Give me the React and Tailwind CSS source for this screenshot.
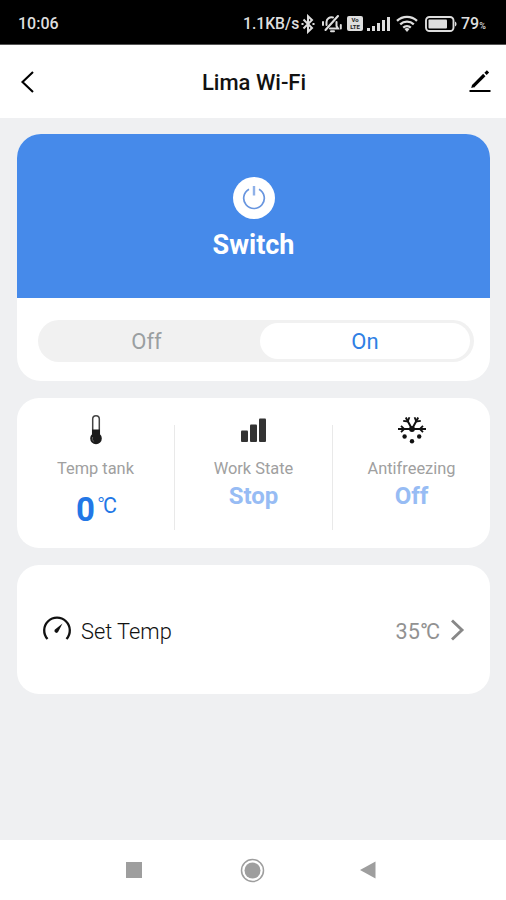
import { useState } from 'react';

function StatusBar() {
  return (
    <div className="flex h-[44.500px] shrink-0 items-center justify-between border-b border-[#555] bg-black pl-[18px] pr-[19px] pt-[4px] text-[#dedede]">
      <span className="text-[16px] font-medium">10:06</span>
      <div className="flex h-5 items-center">
        <span className="w-[57px] whitespace-nowrap text-[15.700px] font-medium">1.1KB/s</span>
        {/* Bluetooth */}
        <svg className="ml-[1px] mr-[6px] h-[20px] w-[14px]" viewBox="0 0 14 20" fill="none" stroke="currentColor" strokeWidth="2">
          <path d="M2.500 5.500 11 14 7 17.800V2.200L11 6l-8.500 8.500" />
          <path d="M.5 10h2M11.500 10h2" strokeWidth="2.200" />
        </svg>
        {/* Muted bell */}
        <svg className="mr-[4px] h-[20px] w-[22px]" viewBox="0 0 22 20" fill="none" stroke="currentColor" strokeWidth="2" strokeLinecap="round">
          <path d="M5.500 11V8a5 5 0 0 1 6.500-4.500M15.500 8v4l1.500 2.500H9M10 17.300h3" />
          <path d="M17 2 4.500 16" strokeWidth="2.100" />
          <path d="M2 8v3M19.800 11v3.500" strokeWidth="2" />
        </svg>
        {/* VoLTE */}
        <span className="mr-[4px] flex h-[15px] w-[16px] flex-col items-center justify-center gap-px rounded-[2px] bg-[#dedede] text-[6px] font-bold text-[#222]">
          <span className="h-[6px] leading-[6px]">Vo</span>
          <span className="h-[6px] leading-[6px]">LTE</span>
        </span>
        {/* Cell signal */}
        <svg className="mr-[6px] h-[16px] w-[23px]" viewBox="0 0 23 16" fill="currentColor">
          <rect x="0" y="12" width="3" height="3" />
          <rect x="5" y="10" width="3" height="5" />
          <rect x="10" y="7" width="3" height="8" />
          <rect x="15" y="4" width="3" height="11" />
          <rect x="20" y="1" width="3" height="14" />
        </svg>
        {/* Wi-Fi */}
        <svg className="mr-[7px] h-[17px] w-[22px]" viewBox="0 0 22 17" fill="none" stroke="currentColor" strokeWidth="2.300">
          <path d="M1 5.800a14.500 14.500 0 0 1 20 0" />
          <path d="M4.200 9.300a10 10 0 0 1 13.600 0" />
          <path d="M7.200 12.600a5.800 5.800 0 0 1 7.600 0" />
          <path d="m11 17-2.500-3a4 4 0 0 1 5 0z" fill="currentColor" stroke="none" />
        </svg>
        {/* Battery */}
        <svg className="mr-[4px] h-[16px] w-[32px]" viewBox="0 0 32 16" fill="none">
          <rect x="1" y="1" width="27.500" height="14" rx="3.500" stroke="currentColor" strokeWidth="1.900" />
          <rect x="3.500" y="3.500" width="18.500" height="9" rx="1" fill="currentColor" />
          <path d="M30 5.500c2 .8 2 4.200 0 5z" fill="currentColor" />
        </svg>
        <span className="w-[26px] whitespace-nowrap text-[16px] font-medium">
          79<span className="text-[9px]">%</span>
        </span>
      </div>
    </div>
  );
}

function Header() {
  return (
    <header className="flex h-[73.500px] shrink-0 items-center justify-between bg-white pl-[20px] pr-[14px] text-black">
      <button aria-label="Back" className="w-[20px] pt-[1px]">
        <svg className="h-[22px] w-[15px]" viewBox="0 0 15 22" fill="none" stroke="currentColor" strokeWidth="2.100">
          <path d="M13 1 2.500 11 13 21" />
        </svg>
      </button>
      <h1 className="pt-[3px] text-[22px] font-medium text-[#111]">Lima Wi-Fi</h1>
      <button aria-label="Edit">
        <svg className="h-[24px] w-[24px]" viewBox="0 0 24 24" fill="none" stroke="currentColor">
          <path d="M5 17.300 16.300 6" strokeWidth="3.200" />
          <path d="m3.200 19 1-3.500 2.500 2.500z" fill="currentColor" stroke="none" />
          <path d="m17.500 4.800 2.500-2.500" strokeWidth="3.200" />
          <path d="M1.500 22h21" strokeWidth="2" />
        </svg>
      </button>
    </header>
  );
}

function SwitchCard() {
  const [on, setOn] = useState(true);

  return (
    <section className="h-[247px] shrink-0 overflow-hidden rounded-[24px] bg-white">
      <div className="flex h-[164px] flex-col items-center bg-[#468aea] pt-[43px] text-white">
        <div className="flex h-[42px] w-[42px] items-center justify-center rounded-full bg-white">
          <svg className="h-[26px] w-[26px]" viewBox="0 0 26 26" fill="none" stroke="#6996df" strokeWidth="1.700">
            <path d="M8 4.200a10.300 10.300 0 1 0 10 0" />
            <path d="M13 1v9.500" stroke="#8fb1e8" strokeWidth="2.400" />
          </svg>
        </div>
        <span className="mt-[9px] text-[27px] font-bold leading-[34px]">Switch</span>
      </div>
      <div className="ml-[21px] mr-[16px] mt-[22px] flex h-[42px] rounded-full bg-[#f1f1f1] p-[3px] pr-[4px] text-[22px]">
        <button
          onClick={() => setOn(false)}
          className={`flex-1 rounded-full pr-[8px] ${on ? 'text-[#9a9fa1]' : 'bg-white text-[#2276df]'}`}
        >
          Off
        </button>
        <button
          onClick={() => setOn(true)}
          className={`w-[210px] rounded-full ${on ? 'bg-white text-[#2f80e4]' : 'text-[#9a9fa1]'}`}
        >
          On
        </button>
      </div>
    </section>
  );
}

function ThermometerIcon() {
  return (
    <svg className="h-[32px] w-[16px]" viewBox="0 0 16 32">
      <path d="M4.700 20V5a3.300 3.300 0 0 1 6.600 0V20" fill="none" stroke="#444" strokeWidth="1.500" />
      <path d="M4 15.500h8v4.700a5.800 5.800 0 1 1-8 0z" fill="#1b1b1b" />
      <path d="M4.600 23a4 4 0 0 0 1 4.500" fill="none" stroke="#777" strokeWidth=".8" />
    </svg>
  );
}

function BarsIcon() {
  return (
    <svg className="h-[32px] w-[28px]" viewBox="0 0 28 32" fill="#333">
      <rect x="1" y="16.500" width="7" height="11.500" rx="1" />
      <rect x="10" y="10.500" width="7" height="17.500" rx="1" />
      <rect x="19" y="4.500" width="7" height="23.500" rx="1" />
    </svg>
  );
}

function FrostIcon() {
  return (
    <svg className="h-[32px] w-[30px]" viewBox="0 0 30 32" fill="none" stroke="#111" strokeWidth="2">
      <path d="M1 15h28M15 15 8.800 3.500M15 15l6.200-11.500" />
      <path d="m4 11.800 3.200 3.200L4 18.200M26 11.800 22.800 15l3.200 3.200M6.200 6.800l4.600.6 1.600-4.200M23.800 6.800l-4.600.6-1.600-4.200" strokeWidth="1.800" />
      <circle cx="15" cy="15" r="2.900" fill="#111" stroke="none" />
      <g fill="#111" stroke="none">
        <circle cx="7.600" cy="22.500" r="2.200" />
        <circle cx="22.200" cy="22.500" r="2.200" />
        <circle cx="15" cy="27.200" r="2.200" />
      </g>
    </svg>
  );
}

function Stat({ icon, label, children }) {
  return (
    <div className="flex flex-1 flex-col items-center pt-[16px]">
      {icon}
      <span className="mt-[12px] whitespace-nowrap text-[16.400px] leading-[22px] text-[#a0a0a0]">{label}</span>
      {children}
    </div>
  );
}

function StatsCard() {
  return (
    <section className="mt-[17px] flex h-[150px] shrink-0 rounded-[22px] bg-white">
      <Stat icon={<ThermometerIcon />} label="Temp tank">
        <div className="mt-[12px] flex items-start text-[#2377e6]">
          <span className="text-[33px] font-bold leading-[36px]">0</span>
          <span className="ml-[2px] text-[21.500px] leading-[28px] tracking-[-2px]">
            <span className="font-light">°</span>C
          </span>
        </div>
      </Stat>
      <div className="mt-[27px] h-[105px] w-px bg-[#e9e9e9]" />
      <Stat icon={<BarsIcon />} label="Work State">
        <span className="text-[24px] font-bold leading-[32px] text-[#97bcf4]">Stop</span>
      </Stat>
      <div className="mt-[27px] h-[105px] w-px bg-[#e9e9e9]" />
      <Stat icon={<FrostIcon />} label="Antifreezing">
        <span className="text-[24px] font-bold leading-[32px] text-[#97bcf4]">Off</span>
      </Stat>
    </section>
  );
}

function SetTempCard() {
  return (
    <section className="mt-[17px] flex h-[129px] shrink-0 items-center rounded-[22px] bg-white pl-[25px] pr-[25px] text-[22px]">
      <svg className="mb-[4px] h-[28px] w-[30px]" viewBox="0 0 30 28" fill="none" stroke="#111" strokeWidth="2.300">
        <path d="M5.500 25a12.800 12.800 0 1 1 19 0" />
        <path d="m20.500 9.500-4.300 8.300a2 2 0 0 1-3.500-2z" fill="#111" stroke="none" />
      </svg>
      <span className="ml-[9px] pt-[5px] text-[21.800px] font-light text-[#111]">Set Temp</span>
      <span className="ml-auto pt-[5px] text-[21.600px] text-[#929292]">
        35<span className="tracking-[-2px]">°C</span>
      </span>
      <svg className="ml-[12px] h-[22px] w-[15px]" viewBox="0 0 15 22" fill="none" stroke="#888" strokeWidth="2.900">
        <path d="m2 1.500 10 9.500L2 20.500" />
      </svg>
    </section>
  );
}

function NavBar() {
  return (
    <nav className="flex h-[60px] shrink-0 items-center bg-white pl-[126px] text-[#9e9e9e]">
      <div className="h-[16px] w-[16px] bg-[#9e9e9e]" />
      <svg className="ml-[98px] h-[25px] w-[25px]" viewBox="0 0 25 25" fill="currentColor">
        <circle cx="12.500" cy="12.500" r="11" fill="none" stroke="currentColor" strokeWidth="1.500" />
        <circle cx="12.500" cy="12.500" r="8" />
      </svg>
      <svg className="ml-[95px] h-[18px] w-[16px]" viewBox="0 0 16 18" fill="currentColor">
        <path d="M0 9 15.500 0.500v17z" />
      </svg>
    </nav>
  );
}

function App() {
  return (
    <div className="flex h-[900px] w-[506px] flex-col overflow-hidden bg-[#eff0f2] font-['Roboto',sans-serif]">
      <StatusBar />
      <Header />
      <main className="flex flex-1 flex-col pl-[17px] pr-[16px] pt-[16px]">
        <SwitchCard />
        <StatsCard />
        <SetTempCard />
      </main>
      <NavBar />
    </div>
  );
}

export default App;
